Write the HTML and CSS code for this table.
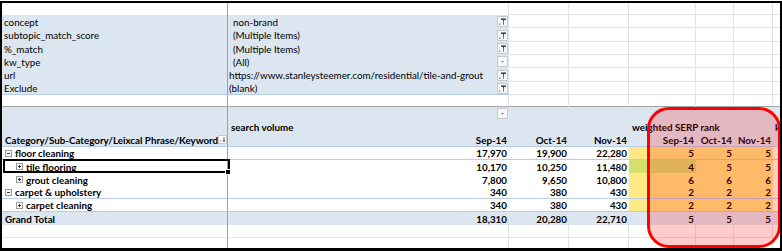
FILE: index.html
```html
<!DOCTYPE html>
<html>
<head>
<meta charset="utf-8">
<link rel="stylesheet" href="styles.css">
</head>
<body>
<div class="sheet">
  <div class="row h12">
    <div class="c a"></div><div class="c b gr"></div><div class="c g"></div><div class="c g"></div><div class="c g"></div><div class="c g"></div><div class="c g"></div><div class="c g"></div>
  </div>

  <div class="row h13 flt">
    <div class="c a blue"><span class="lbl">concept</span></div>
    <div class="c b blue fv"><span class="val ind">non-brand</span><span class="btn"><svg width="11" height="11" viewBox="0 0 11 11"><rect x="4" y="2.5" width="5" height="1.3" fill="#222"/><path d="M5.6 3.8h1.8l-0.6 0.9v4h-0.6v-4z" fill="#222"/><rect x="2.2" y="7.6" width="1.1" height="1.1" fill="#444"/></svg></span></div>
    <div class="c g"></div><div class="c g"></div><div class="c g"></div><div class="c g"></div><div class="c g"></div><div class="c g"></div>
  </div>
  <div class="row h14 flt">
    <div class="c a blue"><span class="lbl">subtopic_match_score</span></div>
    <div class="c b blue fv"><span class="val ind">(Multiple Items)</span><span class="btn"><svg width="11" height="11" viewBox="0 0 11 11"><rect x="4" y="2.5" width="5" height="1.3" fill="#222"/><path d="M5.6 3.8h1.8l-0.6 0.9v4h-0.6v-4z" fill="#222"/><rect x="2.2" y="7.6" width="1.1" height="1.1" fill="#444"/></svg></span></div>
    <div class="c g"></div><div class="c g"></div><div class="c g"></div><div class="c g"></div><div class="c g"></div><div class="c g"></div>
  </div>
  <div class="row h13 flt">
    <div class="c a blue"><span class="lbl">%_match</span></div>
    <div class="c b blue fv"><span class="val ind">(Multiple Items)</span><span class="btn"><svg width="11" height="11" viewBox="0 0 11 11"><rect x="4" y="2.5" width="5" height="1.3" fill="#222"/><path d="M5.6 3.8h1.8l-0.6 0.9v4h-0.6v-4z" fill="#222"/><rect x="2.2" y="7.6" width="1.1" height="1.1" fill="#444"/></svg></span></div>
    <div class="c g"></div><div class="c g"></div><div class="c g"></div><div class="c g"></div><div class="c g"></div><div class="c g"></div>
  </div>
  <div class="row h13 flt">
    <div class="c a blue"><span class="lbl">kw_type</span></div>
    <div class="c b blue fv"><span class="val ind">(All)</span><span class="btn"><svg width="11" height="11" viewBox="0 0 11 11"><path d="M4 5h3l-1.5 1.5z" fill="#777"/></svg></span></div>
    <div class="c g"></div><div class="c g"></div><div class="c g"></div><div class="c g"></div><div class="c g"></div><div class="c g"></div>
  </div>
  <div class="row h14 flt">
    <div class="c a blue"><span class="lbl">url</span></div>
    <div class="c b blue fv"><span class="val">https://www.stanleysteemer.com/residential/tile-and-grout</span><span class="btn"><svg width="11" height="11" viewBox="0 0 11 11"><rect x="4" y="2.5" width="5" height="1.3" fill="#222"/><path d="M5.6 3.8h1.8l-0.6 0.9v4h-0.6v-4z" fill="#222"/><rect x="2.2" y="7.6" width="1.1" height="1.1" fill="#444"/></svg></span></div>
    <div class="c g"></div><div class="c g"></div><div class="c g"></div><div class="c g"></div><div class="c g"></div><div class="c g"></div>
  </div>
  <div class="row h13 flt last">
    <div class="c a blue"><span class="lbl">Exclude</span></div>
    <div class="c b blue fv"><span class="val">(blank)</span><span class="btn"><svg width="11" height="11" viewBox="0 0 11 11"><rect x="4" y="2.5" width="5" height="1.3" fill="#222"/><path d="M5.6 3.8h1.8l-0.6 0.9v4h-0.6v-4z" fill="#222"/><rect x="2.2" y="7.6" width="1.1" height="1.1" fill="#444"/></svg></span></div>
    <div class="c g"></div><div class="c g"></div><div class="c g"></div><div class="c g"></div><div class="c g"></div><div class="c g"></div>
  </div>

  <div class="row h12 frz">
    <div class="c a"></div><div class="c b gr"></div><div class="c g"></div><div class="c g"></div><div class="c g"></div><div class="c g"></div><div class="c g"></div><div class="c g"></div>
  </div>

  <div class="row h13 hdr">
    <div class="c a"></div>
    <div class="c b fv"><span class="val"></span><span class="btn hb"><svg width="11" height="11" viewBox="0 0 11 11"><path d="M4 5h3l-1.5 1.5z" fill="#666"/></svg></span></div>
    <div class="c"></div><div class="c"></div><div class="c"></div><div class="c"></div><div class="c"></div><div class="c"></div>
  </div>
  <div class="row h13 hdr">
    <div class="c a"></div>
    <div class="c b bold pl">search volume</div>
    <div class="c"></div><div class="c"></div>
    <div class="c bold pl ov">weighted SERP rank</div>
    <div class="c"></div><div class="c"></div>
    <div class="c bold pk ov">k</div>
  </div>
  <div class="row h14 hdr lvl">
    <div class="c a bold fv"><span class="val cat">Category/Sub-Category/Leixcal Phrase/Keyword</span><span class="sbtn"><svg width="9" height="8" viewBox="0 0 9 8"><path d="M1.5 4.5h2.2l-1.1 1.1z" fill="#555"/><path d="M6 1.2v4.6" stroke="#444" stroke-width="0.9"/><path d="M4.8 4.6l1.2 1.5 1.2-1.5z" fill="#444"/></svg></span></div>
    <div class="c b bold num">Sep-14</div>
    <div class="c bold num">Oct-14</div>
    <div class="c bold num">Nov-14</div>
    <div class="c bold num">Sep-14</div>
    <div class="c bold num">Oct-14</div>
    <div class="c bold num">Nov-14</div>
    <div class="c"></div>
  </div>

  <div class="row h13 data lvl">
    <div class="c a bold"><span class="tog l1"><svg width="7" height="7" viewBox="0 0 7 7"><rect x="0.5" y="0.5" width="6" height="6" fill="#fff" stroke="#9a9a9a"/><path d="M2 3.5h3" stroke="#333"/></svg></span>floor cleaning</div>
    <div class="c b bold num">17,970</div>
    <div class="c bold num">19,900</div>
    <div class="c bold num">22,280</div>
    <div class="c bold num y">5</div>
    <div class="c bold num y">5</div>
    <div class="c bold num y">5</div>
    <div class="c"></div>
  </div>
  <div class="row h13 data">
    <div class="c a bold sel"><span class="tog l2"><svg width="7" height="7" viewBox="0 0 7 7"><rect x="0.5" y="0.5" width="6" height="6" fill="#fff" stroke="#9a9a9a"/><path d="M2 3.5h3M3.5 2v3" stroke="#333"/></svg></span>tile flooring</div>
    <div class="c b bold num">10,170</div>
    <div class="c bold num">10,250</div>
    <div class="c bold num">11,480</div>
    <div class="c bold num yg">4</div>
    <div class="c bold num y">5</div>
    <div class="c bold num y">5</div>
    <div class="c"></div>
  </div>
  <div class="row h13 data">
    <div class="c a bold"><span class="tog l2"><svg width="7" height="7" viewBox="0 0 7 7"><rect x="0.5" y="0.5" width="6" height="6" fill="#fff" stroke="#9a9a9a"/><path d="M2 3.5h3M3.5 2v3" stroke="#333"/></svg></span>grout cleaning</div>
    <div class="c b bold num">7,800</div>
    <div class="c bold num">9,650</div>
    <div class="c bold num">10,800</div>
    <div class="c bold num y">6</div>
    <div class="c bold num y">6</div>
    <div class="c bold num y">6</div>
    <div class="c"></div>
  </div>
  <div class="row h13 data lvl">
    <div class="c a bold"><span class="tog l1"><svg width="7" height="7" viewBox="0 0 7 7"><rect x="0.5" y="0.5" width="6" height="6" fill="#fff" stroke="#9a9a9a"/><path d="M2 3.5h3" stroke="#333"/></svg></span>carpet &amp; upholstery</div>
    <div class="c b bold num">340</div>
    <div class="c bold num">380</div>
    <div class="c bold num">430</div>
    <div class="c bold num y">2</div>
    <div class="c bold num y">2</div>
    <div class="c bold num y">2</div>
    <div class="c"></div>
  </div>
  <div class="row h13 data lvl">
    <div class="c a bold"><span class="tog l2"><svg width="7" height="7" viewBox="0 0 7 7"><rect x="0.5" y="0.5" width="6" height="6" fill="#fff" stroke="#9a9a9a"/><path d="M2 3.5h3M3.5 2v3" stroke="#333"/></svg></span>carpet cleaning</div>
    <div class="c b bold num">340</div>
    <div class="c bold num">380</div>
    <div class="c bold num">430</div>
    <div class="c bold num y">2</div>
    <div class="c bold num y">2</div>
    <div class="c bold num y">2</div>
    <div class="c"></div>
  </div>
  <div class="row h13 hdr total">
    <div class="c a bold pl">Grand Total</div>
    <div class="c b bold num">18,310</div>
    <div class="c bold num">20,280</div>
    <div class="c bold num">22,710</div>
    <div class="c bold num">5</div>
    <div class="c bold num">5</div>
    <div class="c bold num">5</div>
    <div class="c"></div>
  </div>

  <div class="row h13">
    <div class="c a gb"></div><div class="c g"></div><div class="c g"></div><div class="c g"></div><div class="c g"></div><div class="c g"></div><div class="c g"></div><div class="c g"></div>
  </div>
  <div class="row h10">
    <div class="c a"></div><div class="c gr"></div><div class="c gr"></div><div class="c gr"></div><div class="c gr"></div><div class="c gr"></div><div class="c gr"></div><div class="c gr"></div>
  </div>

  <div class="mark"></div>
</div>
</body>
</html>
```

FILE: styles.css
```css
html, body {
  margin: 0;
  padding: 0;
  background: #fff;
}

.sheet {
  box-sizing: border-box;
  position: relative;
  width: 782px;
  height: 250px;
  margin-top: 1px;
  border: 2px solid #000;
  border-bottom-width: 3px;
  overflow: hidden;
  font-family: Lato, "Liberation Sans", sans-serif;
  font-size: 9.8px;
  color: #000;
}

.row {
  display: grid;
  grid-template-columns: 226px 281px 60px 60px 67px 38px 39px 9px;
}

.h10 { height: 10px; }
.h12 { height: 12px; }
.h13 { height: 13px; }
.h14 { height: 14px; }

.c {
  box-sizing: border-box;
  white-space: nowrap;
  overflow: visible;
  display: flex;
  align-items: center;
  min-width: 0;
}

.ov {
  position: relative;
  z-index: 1;
}

.a {
  border-right: 1px solid #a0a0a0;
}

.g {
  border-right: 1px solid #e4e4e4;
  border-bottom: 1px solid #e4e4e4;
}

.gr {
  border-right: 1px solid #e4e4e4;
}

.gb {
  border-bottom: 1px solid #e4e4e4;
}

.blue {
  background: #dce6f1;
}

.flt.last .blue {
  border-bottom: 1px solid #b8cce4;
}

.frz > .c {
  border-bottom: 1px solid #a3a3a3;
}

.lbl {
  padding-left: 2px;
}

.fv {
  justify-content: space-between;
}

.val {
  padding-left: 1px;
}

.val.ind {
  padding-left: 5px;
}

.val.cat {
  padding-left: 3px;
}

.btn {
  display: flex;
  width: 11px;
  height: 11px;
  margin-right: 1px;
  box-sizing: border-box;
  border: 1px solid #c9c9c9;
  background: #f7f7f7;
  align-items: center;
  justify-content: center;
}

.btn svg {
  flex: none;
  margin: -1px;
}

.sbtn {
  display: flex;
  width: 10px;
  height: 9px;
  margin-right: 0;
  box-sizing: border-box;
  border: 1px solid #c9c9c9;
  background: #fff;
  align-items: center;
  justify-content: center;
  align-self: flex-end;
  margin-bottom: 2px;
}

.sbtn svg {
  flex: none;
  margin: -1px;
}

.hdr > .c {
  background: #dce6f1;
}

.hdr .a {
  border-right: 1px solid #a0a0a0;
}

.lvl > .c {
  border-bottom: 1px solid #b8cce4;
}

.bold {
  font-weight: 700;
}

.pl {
  padding-left: 3px;
}

.pk {
  padding-left: 2px;
}

.num {
  justify-content: flex-end;
  padding-right: 2px;
}

.data > .c {
  background: #fff;
}

.data > .y {
  background: #ffe984;
}

.data > .yg {
  background: #d6df6c;
}

.total > .c {
  background: #dce6f1;
}

.tog {
  display: inline-flex;
  width: 7px;
  height: 7px;
  margin-right: 3px;
}

.tog.l1 {
  margin-left: 3px;
}

.tog.l2 {
  margin-left: 14px;
}

.sel {
  position: relative;
}

.sel::after {
  content: "";
  position: absolute;
  left: 1px;
  top: -1px;
  right: -3px;
  bottom: 0;
  border: 2px solid #000;
}

.sel::before {
  content: "";
  position: absolute;
  right: -4px;
  bottom: -2px;
  width: 4px;
  height: 4px;
  background: #000;
  border: 1px solid #fff;
  z-index: 2;
}

.mark {
  position: absolute;
  z-index: 3;
  left: 645px;
  top: 104px;
  width: 134px;
  height: 141px;
  box-sizing: border-box;
  border: 3px solid #ff0000;
  border-radius: 22px;
  background: rgba(255, 0, 0, 0.2);
}
```
